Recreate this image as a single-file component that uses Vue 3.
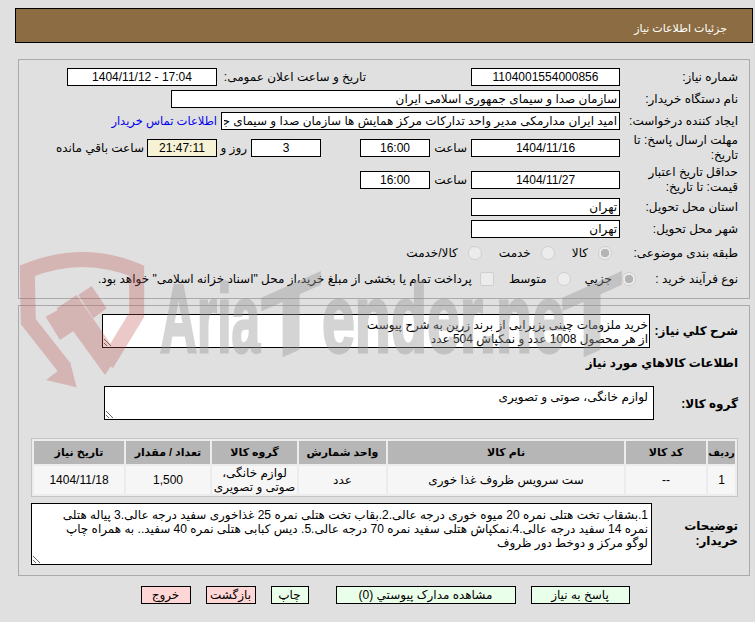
<template>
  <div class="page">
    <div class="head">جزئیات اطلاعات نیاز</div>

    <div class="panel info">
      <div class="row">
        <label class="lbl">شماره نیاز:</label>
        <input class="fld w149" readonly value="1104001554000856" />
        <span class="txt pub">تاریخ و ساعت اعلان عمومی:</span>
        <input class="fld w150 ltr" readonly value="1404/11/12 - 17:04" />
      </div>
      <div class="row">
        <label class="lbl">نام دستگاه خریدار:</label>
        <input class="fld left w449" readonly value="سازمان صدا و سیمای جمهوری اسلامی ایران" />
      </div>
      <div class="row">
        <label class="lbl">ایجاد کننده درخواست:</label>
        <input class="fld left w399" readonly value="امید ایران مدارمکی مدیر واحد تدارکات مرکز همایش ها سازمان صدا و سیمای جمهوری اسلامی ایران" />
        <a class="contact" href="#">اطلاعات تماس خریدار</a>
      </div>
      <div class="row tall">
        <label class="lbl">مهلت ارسال پاسخ: تا تاریخ:</label>
        <input class="fld w149" readonly value="1404/11/16" />
        <span class="txt hour">ساعت</span>
        <input class="fld w70" readonly value="16:00" />
        <input class="fld w70 count" readonly value="3" />
        <span class="txt days">روز و</span>
        <input class="fld w70 timer" readonly value="21:47:11" />
        <span class="txt">ساعت باقي مانده</span>
      </div>
      <div class="row tall">
        <label class="lbl">حداقل تاریخ اعتبار قیمت: تا تاریخ:</label>
        <input class="fld w149" readonly value="1404/11/27" />
        <span class="txt hour">ساعت</span>
        <input class="fld w70" readonly value="16:00" />
      </div>
      <div class="row">
        <label class="lbl">استان محل تحویل:</label>
        <input class="fld left w149" readonly value="تهران" />
      </div>
      <div class="row">
        <label class="lbl">شهر محل تحویل:</label>
        <input class="fld left w149" readonly value="تهران" />
      </div>
      <div class="row opts cat">
        <label class="lbl">طبقه بندی موضوعی:</label>
        <span class="opt"><input type="radio" name="cat" checked disabled />کالا</span>
        <span class="opt"><input type="radio" name="cat" disabled />خدمت</span>
        <span class="opt"><input type="radio" name="cat" disabled />کالا/خدمت</span>
      </div>
      <div class="row opts kind">
        <label class="lbl">نوع فرآیند خرید :</label>
        <span class="opt"><input type="radio" name="kind" checked disabled />جزیي</span>
        <span class="opt"><input type="radio" name="kind" disabled />متوسط</span>
        <span class="opt"><input type="checkbox" disabled />پرداخت تمام یا بخشی از مبلغ خرید،از محل "اسناد خزانه اسلامی" خواهد بود.</span>
      </div>
    </div>

    <div class="panel goods">
      <div class="row summary">
        <label class="lbl bold">شرح کلي نیاز:</label>
        <textarea class="area a-summary" readonly>خرید ملزومات چینی پزیرایی از برند زرین به شرح پیوست
از هر محصول 1008 عدد و نمکپاش 504 عدد</textarea>
      </div>
      <div class="section bold">اطلاعات کالاهاي مورد نیاز</div>
      <div class="row group">
        <label class="lbl bold">گروه کالا:</label>
        <textarea class="area a-group" readonly>لوازم خانگی، صوتی و تصویری</textarea>
      </div>

      <table class="items">
        <thead>
          <tr>
            <th v-for="c in columns" :key="c.title" :style="{ width: c.width + 'px' }">{{ c.title }}</th>
          </tr>
        </thead>
        <tbody>
          <tr>
            <td class="num">1</td>
            <td>--</td>
            <td>ست سرویس ظروف غذا خوری</td>
            <td>عدد</td>
            <td class="tight">لوازم خانگی،<br />صوتی و تصویری</td>
            <td class="num">1,500</td>
            <td class="num">1404/11/18</td>
          </tr>
        </tbody>
      </table>

      <div class="row notes">
        <label class="lbl bold">توضیحات خریدار:</label>
        <textarea class="area a-notes" readonly>1.بشقاب تخت هتلی نمره 20 میوه خوری درجه عالی.2.بقاب تخت هتلی نمره 25 غذاخوری سفید درجه عالی.3 پیاله هتلی نمره 14 سفید درجه عالی.4.نمکپاش هتلی سفید نمره 70 درجه عالی.5. دیس کبابی هتلی نمره 40 سفید.. به همراه چاپ لوگو مرکز و دوخط دور ظروف</textarea>
      </div>
    </div>

    <div class="actions">
      <button class="btn ok b-reply">پاسخ به نیاز</button>
      <button class="btn ok b-docs">مشاهده مدارک پیوستي (0)</button>
      <button class="btn ok b-print">چاپ</button>
      <button class="btn no b-back">بازگشت</button>
      <button class="btn no b-exit">خروج</button>
    </div>

    <svg class="mark" viewBox="0 0 755 622" width="755" height="622">
      <g transform="translate(10 240) scale(0.3333)" class="shield">
        <path d="M165 385 L55 245 L52 92 Q220 25 380 92 L380 225 L290 372" />
        <polygon points="108,420 200,442 180,365" />
        <polygon points="140,205 200,165 325,345 285,405" />
        <polygon points="107,230 155,203 195,270 150,300" />
        <polygon points="205,165 245,138 290,205 250,235" />
      </g>
      <g class="brand">
        <text x="160" y="352" textLength="100" lengthAdjust="spacingAndGlyphs">Aria</text>
        <text transform="translate(291 352) skewY(-24)" text-anchor="middle">T</text>
        <text x="322" y="352" textLength="243" lengthAdjust="spacingAndGlyphs">ender.ne</text>
        <text transform="translate(592 352) skewY(-24)" text-anchor="middle">T</text>
      </g>
    </svg>
  </div>
</template>

<script setup>
const columns = [
  { title: 'ردیف', width: 27 },
  { title: 'کد کالا', width: 80 },
  { title: 'نام کالا', width: 236 },
  { title: 'واحد شمارش', width: 87 },
  { title: 'گروه کالا', width: 85 },
  { title: 'تعداد / مقدار', width: 84 },
  { title: 'تاریخ نیاز', width: 90 },
]
</script>

<style>
body {
  background: #e0e0e0;
}
</style>

<style scoped>
.page {
  position: relative;
  width: 755px;
  height: 622px;
  box-sizing: border-box;
  padding: 8px 2px 0 15px;
  background: #e0e0e0;
  direction: rtl;
  font-family: "Liberation Sans", "DejaVu Sans", sans-serif;
  font-size: 12px;
  color: #000;
  overflow: hidden;
}

.head {
  height: 33px;
  line-height: 38px;
  padding-right: 25px;
  border: 1px solid #000;
  background: #8c6d43;
  color: #fff;
  font-size: 11px;
}

.panel {
  margin: 16px 3px 0;
  border: 1px solid #aaa;
  padding: 8px 11px 8px 0;
}

.info {
  display: flex;
  flex-direction: column;
  gap: 4px;
}

.goods {
  margin-top: 6px;
  height: 271px;
  box-sizing: border-box;
}

.row {
  display: flex;
  align-items: center;
  height: 18px;
}

.tall {
  height: 28px;
}

.opts {
  height: 22px;
}

.lbl {
  flex: none;
  width: 118px;
  line-height: 15px;
}

.bold {
  font-weight: bold;
}

.txt {
  margin-right: 4px;
  white-space: nowrap;
}

.fld {
  flex: none;
  box-sizing: border-box;
  height: 18px;
  padding: 0 2px;
  border: 1px solid #000;
  background: #fff;
  font: inherit;
  text-align: center;
  outline: none;
}

.left {
  text-align: right;
}

.ltr {
  direction: ltr;
}

.w70 { width: 70px; }
.w149 { width: 149px; }
.w150 { width: 150px; margin-right: 5px; }
.w399 { width: 399px; }
.w449 { width: 449px; }

.pub {
  width: 144px;
  margin-right: 105px;
}

.hour {
  width: 37px;
}

.count {
  margin-right: 39px;
}

.days {
  width: 30px;
}

.timer {
  margin-right: 0;
  background: #f5f2d6;
}

.timer + .txt {
  margin-right: 3px;
}

.contact {
  margin-right: 4px;
  color: #0000ee;
  font-size: 11.5px;
  text-decoration: none;
  white-space: nowrap;
}

.opt {
  display: flex;
  align-items: center;
  white-space: nowrap;
}

.opt input {
  appearance: none;
  flex: none;
  width: 14px;
  height: 14px;
  margin: 0 0 0 10px;
  border: 1px solid #cfcfcf;
  border-radius: 50%;
  background: #ececec;
}

.opt input[type="checkbox"] {
  border-radius: 2px;
  margin-left: 8px;
}

.opt input:checked {
  background: radial-gradient(circle, #b4b4b4 0 4px, #ececec 4.5px);
}

.cat .opt {
  margin-right: 17px;
}

.cat .lbl + .opt {
  margin-right: 8px;
}

.kind .opt {
  margin-right: 14px;
}

.kind .lbl + .opt {
  margin-right: -16px;
}

.kind .opt:last-child {
  margin-right: 15px;
}

.area {
  flex: none;
  box-sizing: border-box;
  border: 1px solid #000;
  padding: 3px;
  background: #fff;
  font: inherit;
  line-height: 14px;
  outline: none;
  overflow: hidden;
}

.summary {
  height: 34px;
}

.summary .lbl {
  width: 88px;
}

.a-summary {
  width: 548px;
  height: 34px;
  padding: 3px 1px;
}

.section {
  margin-top: 7px;
  height: 16px;
  line-height: 16px;
}

.group {
  margin-top: 15px;
  height: 34px;
}

.group .lbl {
  width: 84px;
  padding-top: 3px;
}

.a-group {
  width: 550px;
  height: 34px;
  padding: 3px 5px;
}

.items {
  width: 707px;
  margin: 18px 0 0 0;
  table-layout: fixed;
  border-collapse: separate;
  border-spacing: 2px;
  border: 1px solid #c4c4c4;
  background: #ececec;
  text-align: center;
}

.items th {
  height: 23px;
  padding: 0;
  background: #b6b6b6;
  font-size: 11px;
  font-weight: bold;
}

.items th:first-child {
  font-size: 10px;
  white-space: nowrap;
}

.items td {
  height: 28px;
  padding: 0 2px;
  background: #f6f6f6;
  line-height: 14px;
}

.items .tight {
  padding: 0;
  white-space: nowrap;
}

.notes {
  margin-top: 6px;
  height: 62px;
}

.notes .lbl {
  width: 86px;
}

.a-notes {
  width: 621px;
  height: 62px;
  padding: 4px 3px 4px 12px;
}

.actions {
  display: flex;
  justify-content: center;
  margin: 10px 0 0 2px;
  gap: 15px;
}

.btn {
  box-sizing: border-box;
  height: 18px;
  padding: 0;
  border: 1px solid #000;
  font: inherit;
}

.ok { background: #eaffea; }
.no { background: #ffd6d6; }

.b-reply { width: 99px; }
.b-docs { width: 180px; margin-left: 12px; }
.b-print { width: 38px; }
.b-back { width: 50px; }
.b-exit { width: 50px; }

.mark {
  position: absolute;
  top: 0;
  left: 0;
  pointer-events: none;
}

.shield {
  opacity: 0.3;
}

.shield path {
  fill: none;
  stroke: #be5050;
  stroke-width: 45;
}

.shield polygon {
  fill: #be5050;
}

.brand {
  opacity: 0.4;
}

.brand text {
  direction: ltr;
  font-family: "Liberation Sans", sans-serif;
  font-weight: bold;
  font-size: 96px;
  fill: #969696;
  stroke: #969696;
  stroke-width: 3;
}
</style>
